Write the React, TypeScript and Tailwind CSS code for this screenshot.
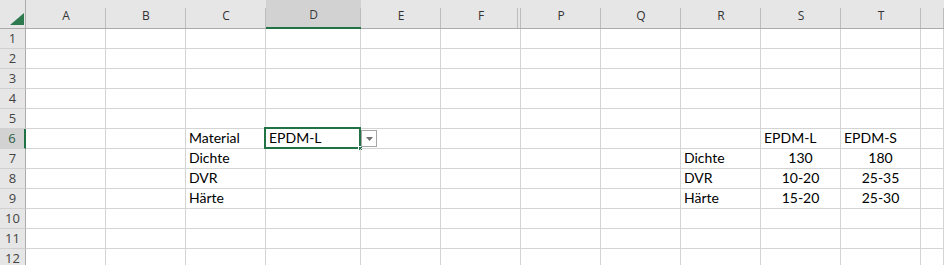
const COLS = ["A", "B", "C", "D", "E", "F", "P", "Q", "R", "S", "T", ""];
const ROWS = [1, 2, 3, 4, 5, 6, 7, 8, 9, 10, 11, 12];

type Cell = { v: string; center?: boolean };

const DATA: Record<string, Cell> = {
  C6: { v: "Material" },
  C7: { v: "Dichte" },
  C8: { v: "DVR" },
  C9: { v: "Härte" },
  D6: { v: "EPDM-L" },
  S6: { v: "EPDM-L" },
  T6: { v: "EPDM-S" },
  R7: { v: "Dichte" },
  R8: { v: "DVR" },
  R9: { v: "Härte" },
  S7: { v: "130", center: true },
  T7: { v: "180", center: true },
  S8: { v: "10-20", center: true },
  T8: { v: "25-35", center: true },
  S9: { v: "15-20", center: true },
  T9: { v: "25-30", center: true },
};

const ACTIVE_COL = "D";
const ACTIVE_ROW = 6;

export default function App() {
  return (
    <div className="h-[265px] w-[944px] overflow-hidden bg-white">
      <div className="grid grid-cols-[26px_80px_80px_80px_95px_80px_80px_80px_80px_80px_80px_80px_1fr]">
        {/* Kopfzeile */}
        <div className="relative h-[29px] border-b border-r border-[#ababab] bg-[#e6e6e6]">
          <svg className="absolute bottom-[3px] right-[1px]" width="14" height="12" viewBox="0 0 14 12">
            <polygon points="14,0 14,12 0,12" fill="#2e7a4f" />
          </svg>
        </div>
        {COLS.map((c, i) => {
          const active = c === ACTIVE_COL;
          return (
            <div
              key={c || "x"}
              className={`relative flex h-[29px] items-end justify-center pb-[3px] font-['Open_Sans',sans-serif] text-[12px] ${
                active
                  ? "border-b-2 border-[#217346] bg-[#d2d2d2] text-[#3b3b3b]"
                  : "border-b border-[#ababab] bg-[#e6e6e6] text-[#333]"
              }`}
            >
              {c}
              <span className="absolute bottom-0 right-0 top-[8px] w-px bg-[#bcbcbc]" />
              {c === "F" && <span className="absolute bottom-0 right-[3px] top-[8px] w-px bg-[#bcbcbc]" />}
            </div>
          );
        })}

        {ROWS.map((r) => (
          <Row key={r} r={r} />
        ))}
      </div>
    </div>
  );
}

function Row({ r }: { r: number }) {
  const activeRow = r === ACTIVE_ROW;
  return (
    <>
      <div
        className={`flex h-[20px] items-center justify-center border-b border-[#d0d0d0] font-['Open_Sans',sans-serif] text-[13px] ${
          activeRow
            ? "border-r-2 border-r-[#217346] bg-[#d2d2d2] text-[#2f5e44]"
            : "border-r border-r-[#ababab] bg-[#e6e6e6] text-[#444]"
        }`}
      >
        {r}
      </div>
      {COLS.map((c) => {
        const cell = DATA[`${c}${r}`];
        const active = c === ACTIVE_COL && activeRow;
        return (
          <div
            key={c || "x"}
            className={`relative flex h-[20px] items-end border-b border-r border-[#d4d4d4] px-[3px] pb-[1px] font-['Lato',sans-serif] text-[14px] leading-[18px] text-black ${
              cell?.center ? "justify-center" : ""
            }`}
          >
            {cell?.v}
            {active && (
              <>
                <span className="pointer-events-none absolute -left-[2px] -top-[2px] bottom-[-1px] right-[-1px] border-2 border-[#217346]" />
                <span className="absolute bottom-[-3px] right-[-3px] h-[5px] w-[5px] border border-white bg-[#217346]" />
                <span className="absolute -right-[17px] top-[1px] z-10 flex h-[17px] w-[16px] items-center justify-center border border-[#a6a6a6] bg-white">
                  <svg width="7" height="4" viewBox="0 0 7 4">
                    <polygon points="0,0 7,0 3.5,4" fill="#707070" />
                  </svg>
                </span>
              </>
            )}
          </div>
        );
      })}
    </>
  );
}
